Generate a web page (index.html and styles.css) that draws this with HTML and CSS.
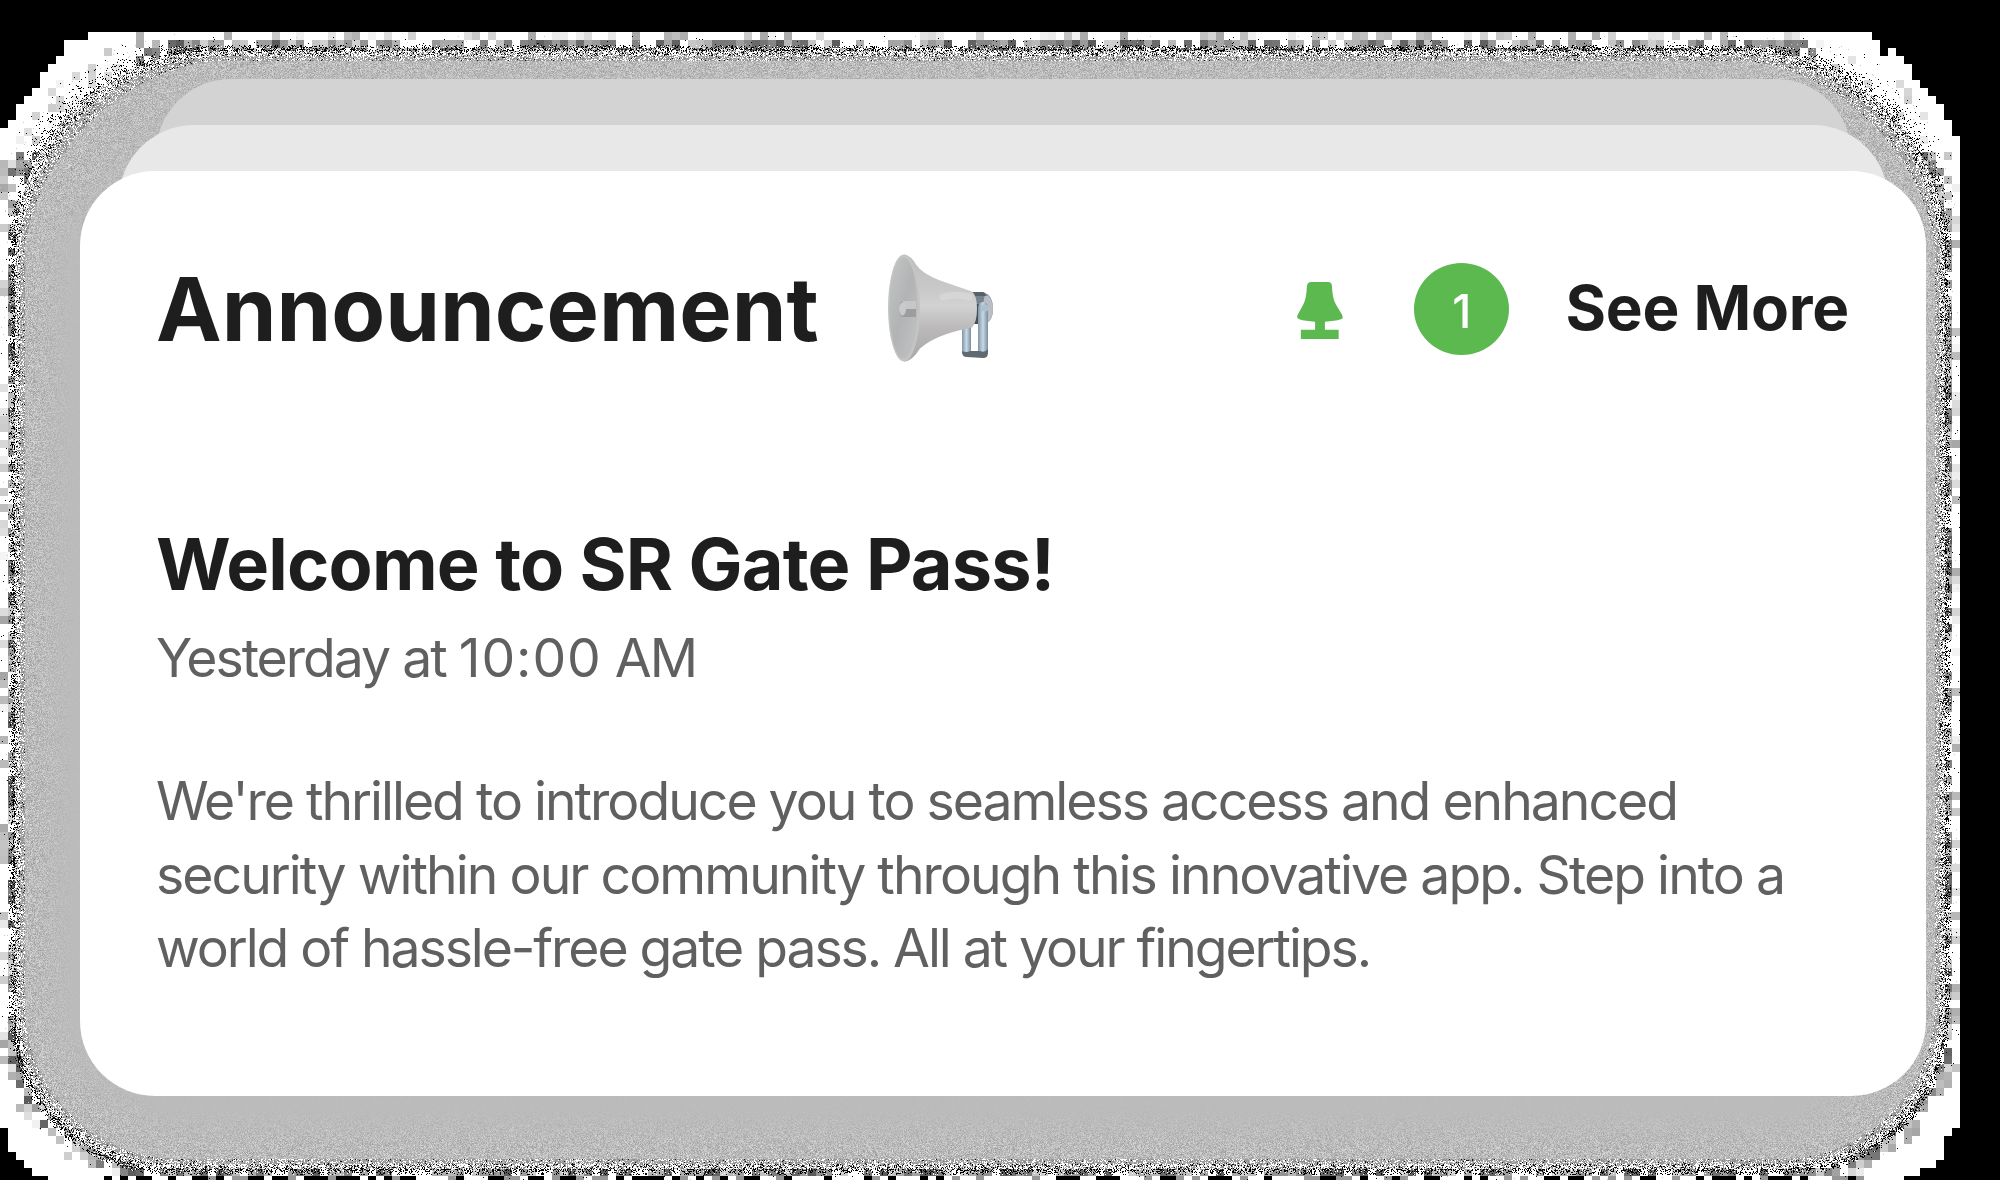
FILE: index.html
```html
<!DOCTYPE html>
<html lang="en">
<head>
<meta charset="utf-8">
<title>Announcement</title>
<link rel="stylesheet" href="styles.css">
</head>
<body>
<canvas class="halo" width="2000" height="1180"></canvas>
<main class="stack">
  <div class="layer layer-back"></div>
  <div class="layer layer-middle"></div>
  <article class="card">
    <header class="card-header">
      <h1 class="title">Announcement</h1>
      <svg class="megaphone" viewBox="0 0 110 112" aria-hidden="true">
        <defs>
          <linearGradient id="cone" x1="0" y1="0" x2="0" y2="1">
            <stop offset="0" stop-color="#bdbdbd"/><stop offset=".35" stop-color="#cbcaca"/>
            <stop offset=".48" stop-color="#d2d2d2"/><stop offset=".7" stop-color="#bab8b8"/><stop offset="1" stop-color="#a8a6a6"/>
          </linearGradient>
          <linearGradient id="bell" x1="0" y1="0" x2="1" y2="1">
            <stop offset="0" stop-color="#c4c5c5"/><stop offset=".5" stop-color="#b2b3b4"/><stop offset="1" stop-color="#c4c4c5"/>
          </linearGradient>
          <linearGradient id="steel" x1="0" y1="0" x2="1" y2="0">
            <stop offset="0" stop-color="#8195a5"/><stop offset=".5" stop-color="#c5d9e9"/><stop offset="1" stop-color="#7c8c99"/>
          </linearGradient>
        </defs>
        <path d="M84 38h12q10 3 10 17 0 10-6 14H84z" fill="#77838d"/>
        <path d="M98 40q8 3 8 15t-7 14q-5-14-1-29z" fill="#b9bec5"/>
        <path d="M84 38h12l4 4H84z" fill="#56616a"/>
        <path d="M87 50h5v20h-5z" fill="#454f57"/>
        <path d="M75 76q0-5 5-5h4v28h-9z" fill="url(#steel)"/>
        <path d="M91 54q0-6 5-6 5 0 5 6v45H91z" fill="url(#steel)"/>
        <circle cx="98" cy="54" r="3.6" fill="#aebfd0"/>
        <path d="M75 97q5 2 8 0h10q5 2 8-2v4q0 5-5 5l-16-1q-5 0-5-5z" fill="#606970"/>
        <path d="M17 .5q7 1 12 10 6 9 24 16l32 11q5 4 5 17 0 14-5 19-20 4-32 9-12 5-20 12-8 13-16 13z" fill="url(#cone)"/>
        <path d="M56 43q13-4 26 0" stroke="#e7e7e7" stroke-width="7" opacity=".35" fill="none" stroke-linecap="round"/>
        <ellipse cx="17" cy="54" rx="16" ry="53.500" fill="#c3c4c4"/>
        <ellipse cx="16.500" cy="54" rx="14" ry="50.500" fill="url(#bell)"/>
        <path d="M16 47h13v16H16q-4-1-4-8t4-8z" fill="#9b9da0"/>
        <path d="M16 47h13v8H14z" fill="#c7c7c7"/>
        <ellipse cx="15.500" cy="55" rx="3.500" ry="6.500" fill="#c9cacb"/>
      </svg>
      <div class="actions">
        <svg class="lamp" viewBox="0 0 46 58" aria-hidden="true">
          <path d="M14 0h17q4 0 4.200 4 .3 12 4 19l5.500 9q3 5-.5 6-6 2-16.200 2.500V48.500h14V58H3.500v-9.500H18V40.500Q8 40 2 38q-4-1.500-1-6l5-9q3.300-7 3.600-18Q9.800 0 14 0z" fill="#5cb950"/>
        </svg>
        <span class="badge">1</span>
        <a class="see-more">See More</a>
      </div>
    </header>
    <h2 class="headline">Welcome to SR Gate Pass!</h2>
    <p class="time">Yesterday at <span class="clock">10:00</span> AM</p>
    <p class="body"><span class="line">We're thrilled to introduce you to seamless access and enhanced</span> <span class="line line-wide">security within our community through this innovative app. Step into a</span> <span class="line line-tight">world of hassle-free gate pass. All at your fingertips.</span></p>
  </article>
</main>
<script src="halo.js"></script>
</body>
</html>
```
FILE: styles.css
```css
body {
  margin: 0;
  width: 2000px;
  height: 1180px;
  overflow: hidden;
  background: #000;
  font-family: Inter, "Liberation Sans", sans-serif;
  color: #1e1e1e;
}

.halo {
  position: absolute;
  left: 0;
  top: 0;
}

.stack {
  position: relative;
  display: grid;
  box-sizing: border-box;
  width: 1926px;
  height: 1096px;
  padding: 79px 0 0 80px;
}

.layer,
.card {
  grid-area: 1 / 1;
  border-radius: 75px;
}

.layer {
  height: 200px;
}

.layer-back {
  margin: 0 75px 0 76px;
  background: #d3d3d3;
}

.layer-middle {
  margin: 46px 38px 0 39px;
  background: #e8e8e8;
}

.card {
  margin-top: 92px;
  padding: 76px 77px 0 76px;
  background: #fff;
}

.card-header {
  display: flex;
  align-items: center;
  height: 124px;
}

h1,
h2,
p {
  margin: 0;
  white-space: nowrap;
}

.title {
  font-size: 88px;
  line-height: 124px;
  font-weight: 700;
}

.megaphone {
  width: 110px;
  height: 112px;
  margin: 1px 0 0 68px;
}

.actions {
  display: flex;
  align-items: center;
  margin-left: auto;
}

.lamp {
  width: 46px;
  height: 57px;
  margin-top: 2px;
}

.badge {
  width: 95px;
  height: 92px;
  margin-left: 71px;
  border-radius: 50%;
  background: #5cb950;
  color: #fff;
  font-size: 46px;
  font-weight: 500;
  line-height: 96px;
  text-align: center;
}

.see-more {
  margin: 0 0 4px 56px;
  font-size: 62px;
  font-weight: 700;
  letter-spacing: -0.250px;
}

.headline {
  margin-top: 148px;
  font-size: 72px;
  line-height: 90px;
  font-weight: 700;
  letter-spacing: -0.820px;
}

.time {
  margin-top: 13px;
  font-size: 53.500px;
  line-height: 72px;
  color: #606060;
  letter-spacing: -2px;
}

.clock {
  letter-spacing: 0.900px;
}

.body {
  margin-top: 70px;
  font-size: 53.500px;
  line-height: 73.500px;
  color: #606060;
  letter-spacing: -2px;
}

.line {
  display: block;
}

.line-wide {
  letter-spacing: -1.950px;
}

.line-tight {
  letter-spacing: -2.070px;
}
```
FILE: halo.js
```js
// Paints the grainy halo around the card: a pixel-stepped rim, a noise ring
// and a grey band that calms down towards the card.
const canvas = document.querySelector(".halo");
const ctx = canvas.getContext("2d");
const W = canvas.width;
const H = canvas.height;

let seed = 20417;
function rand() {
  seed = (seed * 1664525 + 1013904223) >>> 0;
  return seed / 4294967296;
}

// Stepped outline of the rim on an 8px grid.
ctx.fillStyle = "#fff";
const rim = [
  [88, 32], [1872, 32], [1872, 40], [1880, 40], [1880, 56], [1888, 56], [1888, 48],
  [1896, 48], [1896, 56], [1904, 56], [1904, 64], [1912, 64], [1912, 80], [1920, 80],
  [1920, 88], [1928, 88], [1928, 96], [1936, 96], [1936, 104], [1944, 104], [1944, 120],
  [1952, 120], [1952, 136], [1960, 136], [1960, 1128], [1952, 1128], [1952, 1136],
  [1944, 1136], [1944, 1160], [1936, 1160], [1936, 1168], [1920, 1168], [1920, 1176],
  [1904, 1176], [1904, 1180], [48, 1180], [48, 1176], [32, 1176], [32, 1168], [24, 1168],
  [24, 1160], [16, 1160], [16, 1152], [8, 1152], [8, 1128], [0, 1128], [0, 128],
  [8, 128], [8, 120], [16, 120], [16, 104], [24, 104], [24, 96], [32, 96], [32, 88],
  [40, 88], [40, 72], [48, 72], [48, 64], [56, 64], [56, 56], [64, 56], [64, 40], [88, 40]
];
ctx.beginPath();
rim.forEach(([x, y]) => ctx.lineTo(x, y));
ctx.fill();

// Distance inwards from the noise ring; the band widens in the top corners.
const ring = { l: 14, t: 50, r: 1945, b: 1169 };
function depth(x, y) {
  const radius = y < 590 ? 195 : 155;
  const dx = Math.max(ring.l + radius - x, x - (ring.r - radius));
  const dy = Math.max(ring.t + radius - y, y - (ring.b - radius));
  if (dx > 0 && dy > 0) {
    const d = radius - Math.hypot(dx, dy);
    const diagonal = (2 * dx * dy) / (dx * dx + dy * dy);
    return y < 590 ? d / (1 + 1.1 * diagonal) : d / (1 + 0.3 * diagonal);
  }
  return radius - Math.max(dx, dy);
}

// Grey blocks just outside the ring.
for (let y = 32; y < H; y += 8) {
  for (let x = 0; x < 1960; x += 8) {
    const d = depth(x + 4, y + 4);
    const corner = y < 150 && (x < 130 || x > 1810);
    let v = -1;
    if (corner) v = d > -12 && d < 0 && rand() < 0.3 ? 200 + rand() * 50 : -1;
    else if (d > -9 && d < 3) v = rand() < 0.75 ? 90 + rand() * 120 : 255;
    else if (d > -17 && d <= -9) v = rand() < 0.35 ? 165 + rand() * 80 : -1;
    if (y >= 1176 && x > 100 && x < 1860) v = rand() < 0.35 ? 0 : rand() < 0.3 ? 150 : 255;
    if (v >= 0) {
      const g = Math.round(v);
      ctx.fillStyle = `rgb(${g},${g},${g})`;
      ctx.fillRect(x, y, 8, 8);
    }
  }
}

// Fine grain, painted in 1px cells.
const image = ctx.getImageData(0, 0, W, H);
const px = image.data;
for (let y = 32; y < H; y++) {
  for (let x = 0; x < 1960; x++) {
    const d = depth(x, y);
    if (d < -14 || d > 190) continue;
    const n = rand();
    const corner = y < 220 && (x < 170 || x > 1790);
    let v = -1;
    if (d < -5) {
      if (px[(y * W + x) * 4] > 0 && n < (corner && d > -9 ? 0.04 : 0.008)) v = rand() < 0.6 ? 0 : 200;
    } else if (d < 1) {
      if (n < (corner ? 0.07 : 0.2) + (d + 5) * (corner ? 0.04 : 0.07)) v = rand() < 0.75 ? 0 : 255;
    } else if (d < 6) {
      v = n < 0.17 ? 10 : n < 0.64 ? 255 : 125 + rand() * 60;
    } else if (d < 11) {
      v = n < 0.03 ? 20 : n < 0.28 ? 255 : 130 + rand() * 60;
    } else {
      const amp = Math.max(2, 36 - (d - 11) * 0.7);
      v = 187 + (n + rand() - 1) * amp * 1.2;
    }
    if (v < 0) continue;
    const i = (y * W + x) * 4;
    px[i] = px[i + 1] = px[i + 2] = v;
    px[i + 3] = 255;
  }
}
ctx.putImageData(image, 0, 0);
```
